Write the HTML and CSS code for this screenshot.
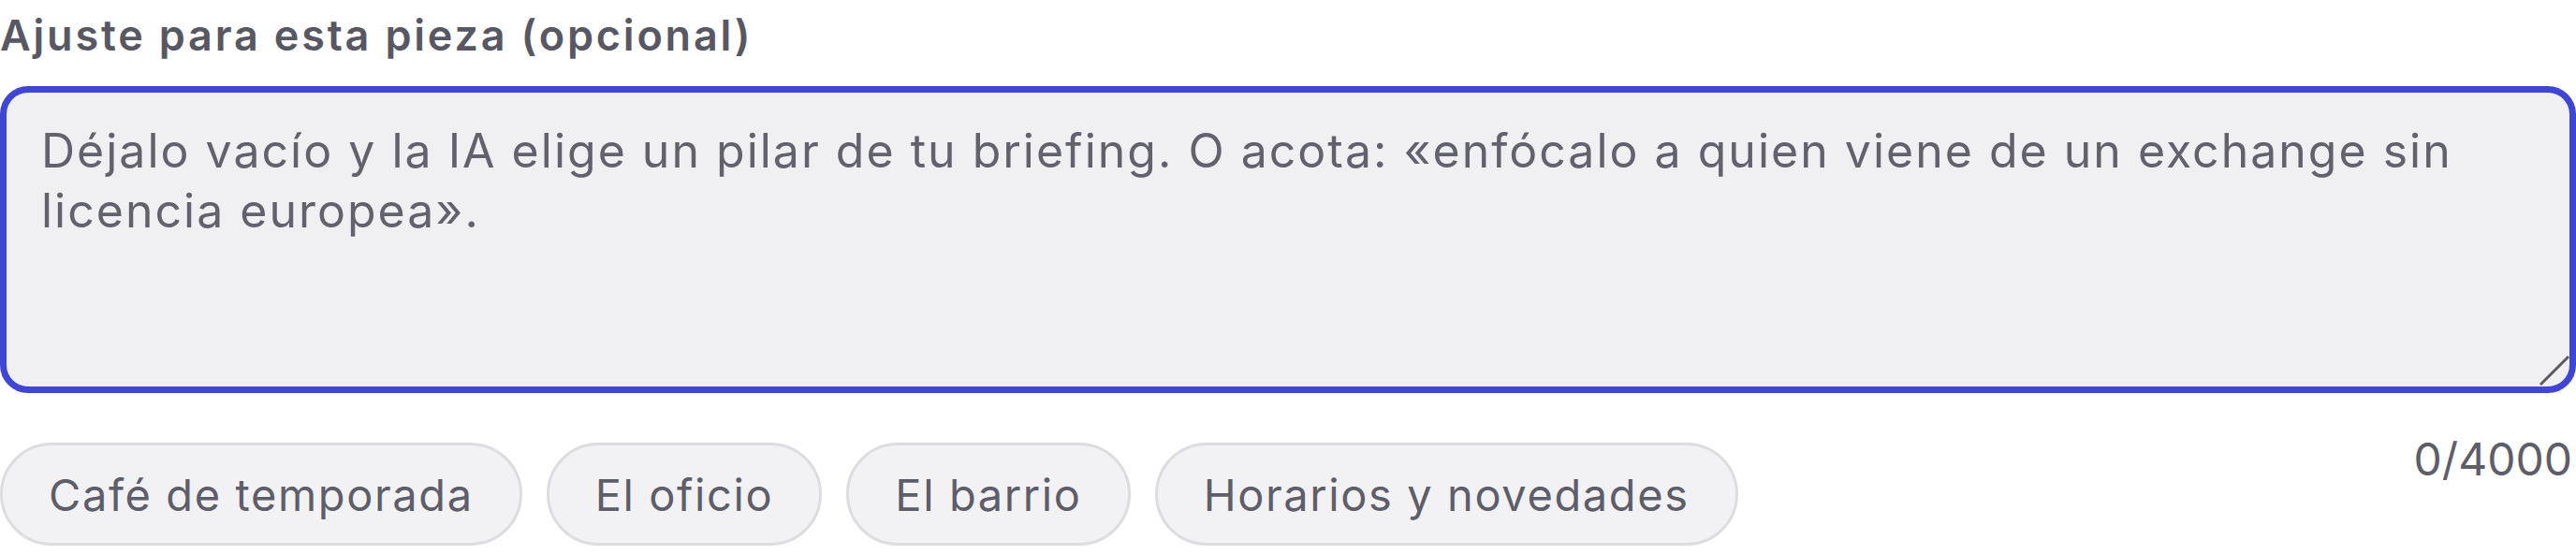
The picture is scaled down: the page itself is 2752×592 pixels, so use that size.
FILE: index.html
```html
<!DOCTYPE html>
<html lang="es">
<head>
<meta charset="UTF-8">
<meta name="viewport" content="width=device-width, initial-scale=1.0">
<title>Ajuste para esta pieza</title>
<link rel="stylesheet" href="styles.css">
</head>
<body>

<div class="field">
    <label class="field-label" for="ajuste">Ajuste para esta pieza (opcional)</label>

    <div class="input-wrap">
        <textarea id="ajuste" class="input" maxlength="4000" autofocus
            placeholder="Déjalo vacío y la IA elige un pilar de tu briefing. O acota: «enfócalo a quien viene de un exchange sin licencia europea»."></textarea>
        <svg class="grip" width="34" height="34" viewBox="0 0 34 34" aria-hidden="true">
            <line x1="2" y1="32" x2="32" y2="2" stroke="#5a5a60" stroke-width="3" />
        </svg>
    </div>

    <div class="field-foot">
        <div class="chips">
            <button class="chip" type="button">Café de temporada</button>
            <button class="chip" type="button">El oficio</button>
            <button class="chip" type="button">El barrio</button>
            <button class="chip" type="button">Horarios y novedades</button>
        </div>
        <span class="counter" id="count">0/4000</span>
    </div>
</div>

</body>
</html>
```

FILE: styles.css
```css
body {
    margin: 0;
    background: #fff;
    color: #5e5e6a;
    font-family: Inter, "Open Sans", sans-serif;
}
.field { padding-top: 6px; }
.field-label {
    display: block;
    font-size: 45px;
    font-weight: 600;
    letter-spacing: 2.8px;
    line-height: 64px;
    color: #585864;
    margin-bottom: 22px;
}
.input-wrap { position: relative; }
.input {
    display: block;
    box-sizing: border-box;
    width: 100%;
    height: 328px;
    margin: 0;
    padding: 30px 37px;
    background: #f0f0f3;
    border: 7px solid #3f46d4;
    border-radius: 30px;
    outline: none;
    resize: none;
    font-family: inherit;
    font-size: 50px;
    letter-spacing: 2px;
    line-height: 64px;
    color: #5e5e6a;
}
.input::placeholder { color: #62626e; opacity: 1; }
.grip {
    position: absolute;
    right: 6px;
    bottom: 7px;
}
.field-foot {
    display: flex;
    justify-content: space-between;
    align-items: flex-start;
    margin-top: 53px;
}
.chips {
    display: flex;
    gap: 26px;
}
.chip {
    height: 110px;
    padding: 0 49px;
    background: #f2f2f5;
    border: 3px solid #dcdce1;
    border-radius: 55px;
    font-family: inherit;
    font-size: 47px;
    letter-spacing: 1.6px;
    color: #5e5e6a;
    cursor: pointer;
}
.counter {
    font-size: 48px;
    line-height: 36px;
    color: #5e5e6a;
    padding-right: 4px;
}
```
